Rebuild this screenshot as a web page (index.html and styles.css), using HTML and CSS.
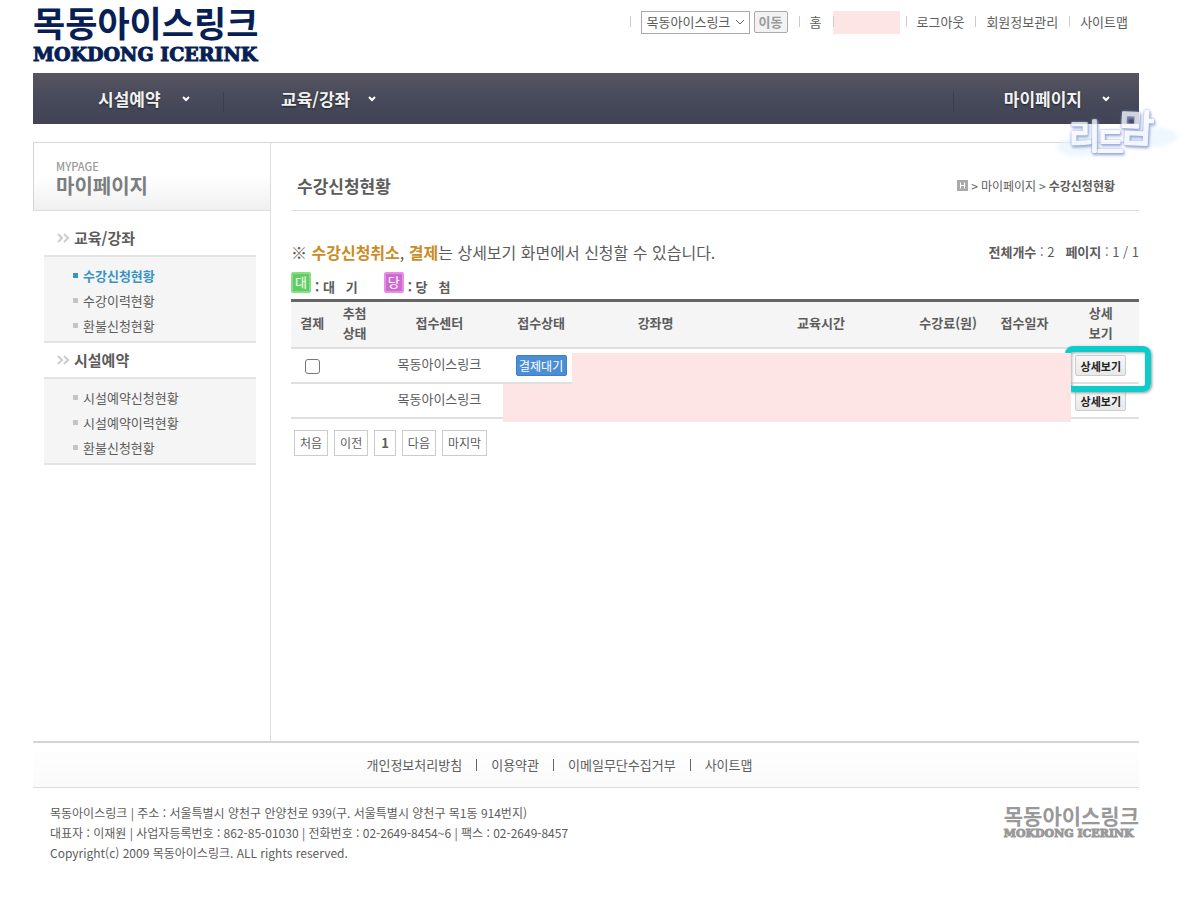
FILE: index.html
```html
<!DOCTYPE html>
<html lang="ko">
<head>
<meta charset="utf-8">
<meta name="viewport" content="width=device-width, initial-scale=1">
<title>수강신청현황 - 목동아이스링크</title>
<link rel="stylesheet" href="styles.css">
</head>
<body>
<div class="page">
  <header class="header">
    <a class="logo" href="#"><span class="logo-ko">목동아이스링크</span><span class="logo-en">MOKDONG ICERINK</span></a>
    <div class="util">
      <form class="site-form util-item">
        <select class="site-select" aria-label="사이트 선택"><option>목동아이스링크</option></select>
        <button class="go" type="button">이동</button>
      </form>
      <a class="util-item" href="#">홈</a>
      <span class="util-item user"><span class="user-mask"></span></span>
      <a class="util-item" href="#">로그아웃</a>
      <a class="util-item" href="#">회원정보관리</a>
      <a class="util-item" href="#">사이트맵</a>
    </div>
  </header>

  <nav class="gnb">
    <a class="gnb-item first" href="#">시설예약<svg class="caret" viewBox="0 0 8 6"><path d="M1 1l3 3 3-3"/></svg></a>
    <a class="gnb-item second" href="#">교육/강좌<svg class="caret" viewBox="0 0 8 6"><path d="M1 1l3 3 3-3"/></svg></a>
    <a class="gnb-item last" href="#">마이페이지<svg class="caret" viewBox="0 0 8 6"><path d="M1 1l3 3 3-3"/></svg></a>
    <svg class="watermark" viewBox="0 0 130 64" role="img" aria-label="리드맘">
      <ellipse class="cloud" cx="98" cy="34" rx="26" ry="10"/>
      <ellipse class="cloud" cx="26" cy="44" rx="22" ry="10"/>
      <g class="mark"><text x="16" y="46" font-size="34">리</text><text x="44" y="50" font-size="29">드</text><text x="66" y="39" font-size="38" transform="rotate(3 84 26)">맘</text></g>
    </svg>
  </nav>

  <div class="body">
    <aside class="side">
      <div class="side-title"><span class="side-en">MYPAGE</span><strong class="side-ko">마이페이지</strong></div>
      <nav class="lnb">
        <h2 class="lnb-head"><svg class="chev" viewBox="0 0 12 10"><path d="M1 1l4 4-4 4M7 1l4 4-4 4"/></svg>교육/강좌</h2>
        <ul class="lnb-list">
          <li class="on"><a href="#">수강신청현황</a></li>
          <li><a href="#">수강이력현황</a></li>
          <li><a href="#">환불신청현황</a></li>
        </ul>
        <h2 class="lnb-head"><svg class="chev" viewBox="0 0 12 10"><path d="M1 1l4 4-4 4M7 1l4 4-4 4"/></svg>시설예약</h2>
        <ul class="lnb-list">
          <li><a href="#">시설예약신청현황</a></li>
          <li><a href="#">시설예약이력현황</a></li>
          <li><a href="#">환불신청현황</a></li>
        </ul>
      </nav>
    </aside>

    <main class="content">
      <div class="title-row">
        <h1>수강신청현황</h1>
        <div class="crumb"><svg class="home" viewBox="0 0 11 11"><rect width="11" height="11" fill="#aaa"/><path d="M3.500 2.500v6M7.500 2.500v6M3.500 5.500h4" stroke="#fff"/></svg><span>&gt;</span><a href="#">마이페이지</a><span>&gt;</span><strong>수강신청현황</strong></div>
      </div>
      <div class="notice-row">
        <p class="notice">※ <b>수강신청취소</b>, <b>결제</b>는 상세보기 화면에서 신청할 수 있습니다.</p>
        <p class="count"><b>전체개수</b> : 2 &nbsp; <b>페이지</b> : 1 / 1</p>
      </div>
      <div class="legend">
        <span class="legend-item"><span class="badge green">대</span><span class="legend-text">: 대 &nbsp; 기</span></span>
        <span class="legend-item"><span class="badge pink">당</span><span class="legend-text">: 당 &nbsp; 첨</span></span>
      </div>
      <div class="table-wrap">
        <table class="list">
          <colgroup><col class="c-pay"><col class="c-draw"><col class="c-center"><col class="c-state"><col class="c-name"><col class="c-time"><col class="c-fee"><col class="c-date"><col class="c-view"></colgroup>
          <thead><tr><th>결제</th><th>추첨<br>상태</th><th>접수센터</th><th>접수상태</th><th>강좌명</th><th>교육시간</th><th>수강료(원)</th><th>접수일자</th><th>상세<br>보기</th></tr></thead>
          <tbody>
            <tr><td><input class="check" type="checkbox" aria-label="결제 선택"></td><td></td><td>목동아이스링크</td><td><span class="wait">결제대기</span></td><td></td><td></td><td></td><td></td><td><button class="view" type="button">상세보기</button></td></tr>
            <tr><td></td><td></td><td>목동아이스링크</td><td></td><td></td><td></td><td></td><td></td><td><button class="view" type="button">상세보기</button></td></tr>
          </tbody>
        </table>
        <div class="focus"></div>
        <div class="mask mask-main"></div>
        <div class="mask mask-state"></div>
      </div>
      <nav class="pager"><a href="#">처음</a><a href="#">이전</a><strong>1</strong><a href="#">다음</a><a href="#">마지막</a></nav>
    </main>
  </div>

  <footer>
    <div class="foot-links"><a href="#">개인정보처리방침</a><a href="#">이용약관</a><a href="#">이메일무단수집거부</a><a href="#">사이트맵</a></div>
    <div class="foot-info">
      <address>목동아이스링크 | 주소 : 서울특별시 양천구 안양천로 939(구. 서울특별시 양천구 목1동 914번지)<br>대표자 : 이재원 | 사업자등록번호 : 862-85-01030 | 전화번호 : 02-2649-8454~6 | 팩스 : 02-2649-8457<br>Copyright(c) 2009 목동아이스링크. ALL rights reserved.</address>
      <div class="foot-logo"><span class="logo-ko">목동아이스링크</span><span class="logo-en">MOKDONG ICERINK</span></div>
    </div>
  </footer>
</div>
</body>
</html>
```
FILE: styles.css
```css
* { box-sizing: border-box; }
body { margin: 0; background: #fff; color: #5c5c5c; font: 13px/20px "Noto Sans CJK KR", sans-serif; }
a { color: inherit; text-decoration: none; }
h1, h2, p, ul { margin: 0; padding: 0; }
ul { list-style: none; }
.page { padding: 0 61px 0 33px; }

.header { display: flex; justify-content: space-between; align-items: flex-start; height: 73px; }
.logo { color: #071f55; }
.logo-ko, .logo-en { display: block; font-weight: 700; white-space: nowrap; }
.logo-ko { font-size: 35px; line-height: 44px; }
.logo-en { font: 700 19px/20px "DejaVu Serif", serif; -webkit-text-stroke: 1px currentColor; }
.util { display: flex; align-items: center; height: 24px; margin-top: 10px; padding-right: 11px; }
.util-item { position: relative; display: flex; align-items: center; padding-left: 11px; margin-left: 11px; }
.util-item::before { content: ""; position: absolute; left: 0; top: calc(50% - 6px); width: 1px; height: 11px; background: #ccc; }
.site-form { gap: 4px; }
.site-select { width: 109px; height: 23px; padding: 0 5px; border: 1px solid #aaa; border-radius: 0; appearance: none; color: #5c5c5c; font: inherit;
  background: #fff url("data:image/svg+xml,%3Csvg xmlns='http://www.w3.org/2000/svg' width='10' height='6'%3E%3Cpath d='M1 1l4 4 4-4' fill='none' stroke='%23666'/%3E%3C/svg%3E") no-repeat right 4px center; }
.go { width: 34px; height: 22px; padding: 0; border: 1px solid #aaa; border-radius: 2px; background: #f2f2f2; color: #999; font: 700 13px/18px "Noto Sans CJK KR", sans-serif; }
.user { padding-left: 0; margin-right: -5px; }
.user-mask { width: 67px; height: 23px; background: #fee5e5; }

.gnb { position: relative; display: flex; height: 51px; background: linear-gradient(#575561, #454859 60%, #424455); color: #f2f2f2; }
.gnb-item { display: flex; align-items: center; gap: 21px; font-size: 17px; font-weight: 700; text-shadow: 0 1px 2px #222; }
.first { width: 190px; padding-left: 65px; }
.second { padding-left: 58px; position: relative; gap: 18px; }
.second::before, .last::before { content: ""; position: absolute; left: 0; top: 19px; height: 20px; width: 1px; background: #3c3d4b; }
.last { position: relative; margin-left: auto; padding: 0 29px 0 51px; gap: 20px; }
.caret { width: 8px; height: 6px; fill: none; stroke: #fff; stroke-width: 2; }
.watermark { position: absolute; right: -44px; top: 30px; width: 130px; height: 64px; overflow: visible; }
.cloud { fill: #e4f3fd; opacity: .65; filter: blur(2px); }
.mark { fill: #f4f8ff; stroke: #f4f8ff; stroke-width: 2px; stroke-linejoin: round; opacity: .8; filter: drop-shadow(0 0 1px #7d8ccb) drop-shadow(1px 2px 1px #8fa0d8); }

.body { display: flex; margin-top: 18px; min-height: 599px; border-top: 1px solid #d5d7d5; }
.side { flex: 0 0 238px; border-right: 1px solid #ddd; }
.side-title { height: 68px; padding: 15px 22px 0; border-left: 1px solid #d5d5d5; border-bottom: 1px solid #ddd; background: linear-gradient(#fff 50%, #f0f0f0); }
.side-en { display: block; font-size: 11px; line-height: 16px; font-weight: 500; color: #999; }
.side-ko { display: block; font-size: 20px; line-height: 24px; color: #7b7e80; }
.lnb { padding: 10px 14px 0 11px; }
.lnb-head { display: flex; align-items: center; gap: 5px; height: 34px; padding: 0 13px; font-size: 15px; }
.chev { width: 12px; height: 10px; fill: none; stroke: #ccc; stroke-width: 2; }
.lnb-list { padding: 6px 0 3px 29px; border-top: 2px solid #e3e3e3; border-bottom: 2px solid #e3e3e3; background: #f5f5f5; }
.lnb-list li { display: flex; align-items: center; gap: 5px; line-height: 25px; }
.lnb-list li::before { content: ""; width: 5px; height: 5px; background: #c4c4c4; }
.lnb-list .on { color: #3594c5; font-weight: 700; }
.lnb-list .on::before { background: #3594c5; }

.content { flex: 1; min-width: 0; padding-left: 20px; }
.title-row { display: flex; justify-content: space-between; align-items: center; height: 68px; padding: 18px 24px 0 6px; border-bottom: 1px solid #ddd; }
h1 { font-size: 17px; line-height: 24px; }
.crumb { display: flex; align-items: center; gap: 3px; font-size: 12px; }
.home { width: 11px; height: 11px; }
.notice-row { display: flex; justify-content: space-between; align-items: center; padding-top: 29px; line-height: 24px; }
.notice { font-size: 16px; }
.notice b { color: #cb8b25; }
.legend { display: flex; gap: 26px; height: 35px; padding-top: 8px; }
.legend-item { display: flex; gap: 4px; }
.legend-text { padding-top: 5px; font-weight: 700; white-space: pre; }
.badge { width: 20px; height: 21px; border: 2px solid; border-radius: 2px; color: #fff; font-size: 13px; line-height: 16px; text-align: center; }
.green { background: #5fce62; border-color: #8add87; }
.badge.pink { background: #cf69d1; border-color: #e391e2; }
.table-wrap { position: relative; }
.list { width: 100%; table-layout: fixed; border-collapse: separate; border-spacing: 0; border-top: 3px solid #666; text-align: center; }
.list th, .list td { padding: 0 0 3px; border-bottom: 2px solid #e0e0e0; vertical-align: middle; }
.list th { height: 47px; background: #f5f5f5; }
.list td { height: 35px; }
.c-pay { width: 5%; }
.c-draw { width: 5%; }
.c-center { width: 15%; }
.c-state { width: 9%; }
.c-name { width: 18%; }
.c-time { width: 21%; }
.c-fee { width: 9%; }
.c-date { width: 9%; }
.c-view { width: 9%; }
.check { display: block; width: 15px; height: 15px; margin: 4px auto 0; appearance: none; border: 1px solid #777; border-radius: 3px; background: #fff; }
.wait { display: block; width: 51px; margin: 3px auto 0; border: 1px solid #3f80c4; border-radius: 2px; background: #4b8ed5; color: #fff; font-size: 12px; line-height: 19px; }
.view { display: block; width: 51px; height: 21px; margin: 3px auto 0; padding: 0; border: 1px solid #ccc; border-radius: 2px; background: linear-gradient(#f7f7f7, #e8e8e8); color: #222; font: 700 11px/18px "Noto Sans CJK KR", sans-serif; }
.focus { position: absolute; top: 47px; right: -12px; width: 86px; height: 46px; border: 6px solid #0dcccb; border-radius: 8px; box-shadow: 1px 1px 3px #999, inset 1px 1px 3px #aaa; }
.mask { position: absolute; background: #fee5e5; }
.mask-main { top: 54px; left: 281px; right: 68px; height: 69px; }
.mask-state { top: 85px; left: 212px; width: 69px; height: 38px; }
.pager { display: flex; gap: 6px; padding: 11px 0 0 3px; font-size: 12px; }
.pager a, .pager strong { padding: 0 5px; border: 1px solid #ccc; line-height: 24px; }
.pager strong { padding: 0 6px; font-size: 13px; }

.foot-links { display: flex; justify-content: center; height: 47px; padding-right: 53px; border-top: 2px solid #d5d5d5; border-bottom: 1px solid #ddd; background: linear-gradient(#fff, #fafafa); line-height: 43px; }
.foot-links a + a { position: relative; margin-left: 29px; }
.foot-links a + a::before { content: ""; position: absolute; left: -15px; top: 16px; width: 1px; height: 12px; background: #666; }
.foot-info { display: flex; justify-content: space-between; padding: 15px 0 0 17px; }
address { font-size: 12px; line-height: 20px; font-style: normal; }
.foot-logo { color: #999; }
.foot-logo .logo-ko { font-size: 21px; line-height: 25px; }
.foot-logo .logo-en { font-size: 11px; line-height: 12px; }
```
